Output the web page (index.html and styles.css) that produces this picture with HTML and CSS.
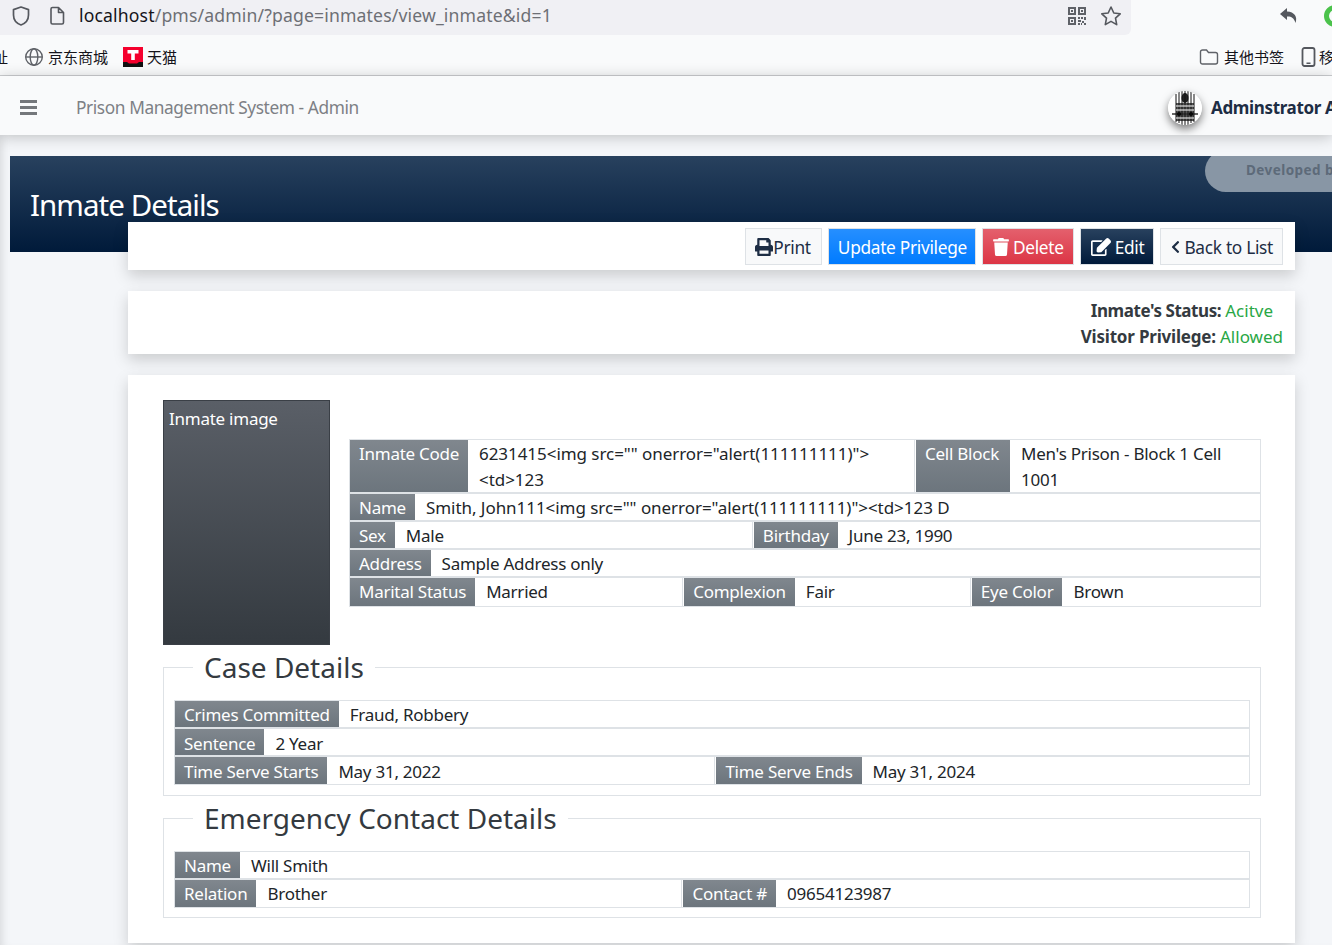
FILE: index.html
```html
<!DOCTYPE html>
<html lang="en">
<head>
  <meta charset="UTF-8" />
  <title>Inmate Details</title>
  <link rel="stylesheet" href="styles.css">
</head>
<body>
  <div class="browser-top">
    <div class="url-bar">
      <svg class="ic shield" viewBox="0 0 20 22" width="20" height="22"><path d="M10 2 L17.5 4.6 V10 C17.5 15 14 18.5 10 20 C6 18.5 2.5 15 2.5 10 V4.6 Z" fill="none" stroke="#55585e" stroke-width="1.7" stroke-linejoin="round"/></svg>
      <svg class="ic page" viewBox="0 0 16 20" width="16" height="20"><path d="M2 3 a1.5 1.5 0 0 1 1.5 -1.5 H9.5 L14.5 6.5 V16.5 a1.5 1.5 0 0 1 -1.5 1.5 H3.5 A1.5 1.5 0 0 1 2 16.5 Z M9.5 1.5 V6.5 H14.5" fill="none" stroke="#55585e" stroke-width="1.6" stroke-linejoin="round"/></svg>
      <span class="url"><b>localhost</b>/pms/admin/?page=inmates/view_inmate&amp;id=1</span>
      <span class="spacer"></span>
      <svg class="ic qr" viewBox="0 0 18 18" width="18" height="18" fill="#5f6268"><path d="M0 0h8v8H0zM2 2v4h4V2zM3 3h2v2H3zM10 0h8v8h-8zM12 2v4h4V2zM13 3h2v2h-2zM0 10h8v8H0zM2 12v4h4v-4zM3 13h2v2H3zM10 10h2v2h-2zM13 10h2v2h-2zM16 10h2v3h-2zM10 13h3v2h-3zM14 14h2v2h-2zM10 16h2v2h-2zM13 16h1v2h-1zM16 16h2v2h-2z" fill-rule="evenodd"/></svg>
      <svg class="ic star" viewBox="0 0 22 22" width="22" height="22"><path d="M11 2 L13.8 8 L20.2 8.8 L15.5 13.2 L16.7 19.6 L11 16.4 L5.3 19.6 L6.5 13.2 L1.8 8.8 L8.2 8 Z" fill="none" stroke="#55585e" stroke-width="1.6" stroke-linejoin="round"/></svg>
    </div>
    <svg class="ic back" viewBox="0 0 20 18" width="20" height="18"><path d="M8 1 L1 7 L8 13 V9.5 C12 9.2 15 10.8 16.5 16 C18.8 9.5 15.5 4.8 8 4.4 Z" fill="#55585e"/></svg>
    <span class="green-dot"></span>
  </div>

  <div class="bookmarks">
    <span class="bm bm-cut">址</span>
    <span class="bm bm-jd">
      <svg viewBox="0 0 20 20" width="20" height="20"><g fill="none" stroke="#5f6268" stroke-width="1.4"><circle cx="10" cy="10" r="8.3"/><ellipse cx="10" cy="10" rx="3.8" ry="8.3"/><path d="M1.7 10h16.6"/></g></svg>
      京东商城
    </span>
    <span class="bm bm-tm">
      <svg viewBox="0 0 20 20" width="20" height="20"><rect width="20" height="20" fill="#f5002d"/><path d="M0 15h4l2 1.500h8l2-1.500h4v5H0z" fill="#111"/><path d="M4.500 3h11v3.500h-3.700V13H8.200V6.500H4.500z" fill="#fff"/></svg>
      天猫
    </span>
    <span class="spacer"></span>
    <span class="bm bm-other">
      <svg viewBox="0 0 20 18" width="20" height="18"><path d="M1.500 4a2 2 0 0 1 2-2h4l2 2.500h7a2 2 0 0 1 2 2V14a2 2 0 0 1-2 2h-13a2 2 0 0 1-2-2z" fill="none" stroke="#5f6268" stroke-width="1.400"/></svg>
      其他书签
    </span>
    <span class="bm bm-mobile">
      <svg viewBox="0 0 14 20" width="15" height="20"><rect x="1" y="1" width="12" height="18" rx="2" fill="none" stroke="#55585e" stroke-width="1.800"/><rect x="5" y="15.500" width="4" height="1.500" fill="#55585e"/></svg>
      移动设备上的书签
    </span>
  </div>

  <nav class="navbar">
    <div class="burger"><i></i><i></i><i></i></div>
    <span class="brand">Prison Management System - Admin</span>
    <span class="spacer"></span>
    <span class="avatar">
      <svg viewBox="0 0 34 34" width="34" height="34"><circle cx="17" cy="17" r="17" fill="#fff"/><ellipse cx="17" cy="7" rx="3.500" ry="5" fill="#222"/><rect x="8" y="12" width="18" height="18" fill="#555"/><path d="M4 23 H30" stroke="#333" stroke-width="1.500"/><circle cx="11" cy="23" r="2" fill="#000"/><circle cx="23" cy="23" r="2" fill="#000"/><path d="M8 3V31M11 1V32M14 0V34M17 0V34M20 0V34M23 1V32M26 3V31" stroke="#111" stroke-width="1"/><path d="M8 15H26M8 19H26M8 27H26" stroke="#fff" stroke-width="1"/></svg>
    </span>
    <span class="user">Adminstrator Admin</span>
  </nav>

  <main class="content">
    <header class="hero">
      <h1>Inmate Details</h1>
      <div class="dev-pill">Developed by</div>
    </header>

    <section class="card actions">
      <a class="btn btn-light btn-print"><svg viewBox="0 0 512 512" width="18" height="18"><path fill="#1d2d44" d="M448 192V77.300c0-8.500-3.400-16.600-9.400-22.600L393.400 9.400c-6-6-14.100-9.400-22.600-9.400H96C78.300 0 64 14.300 64 32v160c-35.300 0-64 28.700-64 64v112c0 8.800 7.200 16 16 16h48v96c0 17.700 14.300 32 32 32h320c17.700 0 32-14.300 32-32v-96h48c8.800 0 16-7.200 16-16V256c0-35.300-28.700-64-64-64zm-64 256H128v-96h256v96zm0-224H128V64h192v48c0 8.800 7.200 16 16 16h48v96z"/></svg>Print</a>
      <a class="btn btn-blue">Update Privilege</a>
      <a class="btn btn-red"><svg viewBox="0 0 448 512" width="16" height="18"><path fill="#fff" d="M432 32H312l-9.400-18.700A24 24 0 0 0 281.100 0H166.800a23.700 23.700 0 0 0-21.400 13.300L136 32H16A16 16 0 0 0 0 48v32a16 16 0 0 0 16 16h416a16 16 0 0 0 16-16V48a16 16 0 0 0-16-16zM53.200 467a48 48 0 0 0 47.900 45h245.800a48 48 0 0 0 47.900-45L416 128H32z"/></svg>Delete</a>
      <a class="btn btn-navy"><svg viewBox="0 0 576 512" width="20" height="18"><path fill="#fff" d="M402.300 344.900l32-32c5-5 13.700-1.500 13.700 5.700V464c0 26.500-21.500 48-48 48H48c-26.500 0-48-21.500-48-48V112c0-26.500 21.500-48 48-48h273.500c7.100 0 10.700 8.600 5.700 13.700l-32 32c-1.500 1.500-3.500 2.300-5.700 2.300H48v352h352V350.500c0-2.100.8-4.100 2.300-5.600zm156.600-201.800L296.300 405.700l-90.400 10c-26.200 2.900-48.500-19.200-45.600-45.600l10-90.400L432.900 17.100c22.900-22.900 59.900-22.900 82.700 0l43.200 43.200c22.900 22.900 22.900 60 .1 82.800z"/></svg>Edit</a>
      <a class="btn btn-light btn-back"><svg viewBox="0 0 320 512" width="9" height="14"><path fill="#1d2d44" d="M34.500 239L228.900 44.700c9.400-9.400 24.600-9.400 33.900 0l22.700 22.700c9.400 9.400 9.400 24.500 0 33.900L131.500 256l154 154.800c9.300 9.400 9.300 24.500 0 33.900l-22.700 22.700c-9.400 9.400-24.600 9.400-33.900 0L34.500 273c-9.400-9.400-9.400-24.600 0-34z"/></svg>Back to List</a>
    </section>

    <section class="card status">
      <div class="status-line first"><b>Inmate's Status:</b> <span class="ok">Acitve</span></div>
      <div class="status-line"><b>Visitor Privilege:</b> <span class="ok">Allowed</span></div>
    </section>

    <section class="card details">
      <div class="top">
        <div class="photo">Inmate image</div>
        <div class="info">
          <div class="row tall">
            <span class="lb w-code">Inmate Code</span>
            <span class="val w-codeval wide">6231415&lt;img src="" onerror="alert(111111111)"&gt;&lt;td&gt;123</span>
            <span class="lb w-block">Cell Block</span>
            <span class="val grow">Men's Prison - Block 1 Cell 1001</span>
          </div>
          <div class="row">
            <span class="lb">Name</span>
            <span class="val grow wide">Smith, John111&lt;img src="" onerror="alert(111111111)"&gt;&lt;td&gt;123 D</span>
          </div>
          <div class="row">
            <span class="lb">Sex</span>
            <span class="val w-sex">Male</span>
            <span class="lb">Birthday</span>
            <span class="val grow">June 23, 1990</span>
          </div>
          <div class="row">
            <span class="lb">Address</span>
            <span class="val grow">Sample Address only</span>
          </div>
          <div class="row">
            <span class="lb">Marital Status</span>
            <span class="val w-marital">Married</span>
            <span class="lb">Complexion</span>
            <span class="val w-complexion">Fair</span>
            <span class="lb">Eye Color</span>
            <span class="val grow">Brown</span>
          </div>
        </div>
      </div>

      <fieldset class="group case">
        <legend>Case Details</legend>
        <div class="row">
          <span class="lb">Crimes Committed</span>
          <span class="val grow">Fraud, Robbery</span>
        </div>
        <div class="row">
          <span class="lb">Sentence</span>
          <span class="val grow">2 Year</span>
        </div>
        <div class="row">
          <span class="lb">Time Serve Starts</span>
          <span class="val w-start">May 31, 2022</span>
          <span class="lb">Time Serve Ends</span>
          <span class="val grow">May 31, 2024</span>
        </div>
      </fieldset>

      <fieldset class="group contact">
        <legend>Emergency Contact Details</legend>
        <div class="row">
          <span class="lb">Name</span>
          <span class="val grow">Will Smith</span>
        </div>
        <div class="row tight">
          <span class="lb">Relation</span>
          <span class="val w-rel">Brother</span>
          <span class="lb">Contact #</span>
          <span class="val grow">09654123987</span>
        </div>
      </fieldset>
    </section>
  </main>
</body>
</html>
```

FILE: styles.css
```css
* { box-sizing: border-box; }
html, body { height: 945px; overflow: hidden; }
body { margin: 0; width: 1332px; background: #f4f6f9; color: #212529; font-family: "Noto Sans", "Noto Sans CJK SC", sans-serif; font-size: 17px; letter-spacing: -.25px; }
.spacer { flex: 1; }

/* browser chrome */
.browser-top { height: 40px; background: #f9fafb; display: flex; align-items: flex-start; overflow: hidden; }
.url-bar { width: 1131px; height: 35px; background: #f0f0f4; border-radius: 0 0 6px 0; display: flex; align-items: center; padding: 0 9px 4px 11px; flex: none; }
.page { margin-left: 18px; }
.url { margin: 0 0 2px 14px; font-size: 17.600px; color: #6d6f75; letter-spacing: .15px; }
.url b { font-weight: 400; color: #15141a; }
.star { margin-left: 14px; }
.back { margin: 7px 0 0 148px; flex: none; }
.green-dot { width: 22px; height: 22px; margin: 5px 0 0 25px; border-radius: 50%; border: 5px solid #4bc24b; flex: none; }

.bookmarks { height: 36px; background: #f9fafb; border-bottom: 1px solid #ccced1; display: flex; align-items: center; font-size: 15px; letter-spacing: 0; color: #15141a; overflow: hidden; padding-bottom: 2px; white-space: nowrap; }
.bm { display: inline-flex; align-items: center; gap: 4px; flex: none; }
.bm svg { flex: none; }
.bm-cut { width: 8px; overflow: hidden; justify-content: flex-end; }
.bm-jd { margin-left: 16px; }
.bm-tm { margin-left: 15px; }
.bm-other { gap: 5px; }
.bm-mobile { margin: 0 -100px 0 17px; width: 131px; gap: 3px; }

/* navbar */
.navbar { height: 59px; padding-top: 4px; background: #f9fafb; display: flex; align-items: center; box-shadow: 0 2px 14px rgba(0,0,0,.22); position: relative; overflow: hidden; white-space: nowrap; }
.burger { width: 17px; margin-left: 20px; display: flex; flex-direction: column; gap: 3px; }
.burger i { display: block; height: 3px; background: #74777b; }
.brand { margin-left: 39px; color: #7d8085; font-size: 17.300px; letter-spacing: -.4px; }
.avatar { width: 34px; height: 34px; border-radius: 50%; box-shadow: 0 4px 8px rgba(0,0,0,.5); overflow: hidden; margin-right: 9px; flex: none; }
.user { font-weight: 700; color: #1d2d44; margin-right: -43px; flex: none; width: 164px; font-size: 17px; letter-spacing: -.35px; }

/* page */
.content { padding: 21px 37px 0 128px; position: relative; box-shadow: inset 8px 0 8px -6px rgba(0,0,0,.12); height: 810px; }
.hero { position: relative; height: 96px; margin: 0 -37px 0 -118px; background: linear-gradient(#28415e, #001a3a); overflow: hidden; }
.hero h1 { margin: 0; padding: 29px 0 0 20px; font-weight: 400; font-size: 29.500px; letter-spacing: -.95px; line-height: 40px; color: #fff; }
.dev-pill { position: absolute; top: -6px; left: 1195px; width: 160px; height: 42px; border-radius: 21px 0 0 21px; background: #8896a5; color: #5d6a79; font-size: 13.500px; letter-spacing: .45px; font-weight: 700; padding: 11px 0 0 41px; white-space: nowrap; }

.card { background: #fff; box-shadow: 0 6px 14px rgba(0,0,0,.17); }
.actions { height: 48px; margin-top: -30px; position: relative; display: flex; justify-content: flex-end; align-items: center; gap: 6px; padding: 0 12px 0 0; }
.btn { height: 37px; display: inline-flex; align-items: center; padding: 2px 9px 0 10px; border: 1px solid #dee2e6; color: #fff; font-size: 17.300px; letter-spacing: -.3px; white-space: nowrap; }
.btn svg { margin-right: 4px; flex: none; }
.btn-light { background: #f8f9fa; color: #1d2d44; }
.btn-print { padding-left: 9px; padding-right: 10px; }
.btn-print svg { margin-right: 0; }
.btn-blue { background: linear-gradient(#268fff, #007bff); padding-left: 9px; padding-right: 8px; }
.btn-red { background: linear-gradient(#e4606d, #dc3545); }
.btn-navy { background: linear-gradient(#28415e, #001a3a); }

.status { height: 63px; margin-top: 21px; text-align: right; padding: 7px 12px 0 0; line-height: 26px; }
.status-line.first { padding-right: 10px; }
.status-line b { color: #343a40; letter-spacing: -.2px; }
.status-line.first b { letter-spacing: -.45px; }
.ok { color: #28a745; letter-spacing: 0; }

.details { margin-top: 21px; height: 568px; padding: 25px 34px 0 35px; }
.top { display: flex; }
.photo { width: 167px; height: 245px; flex: none; background: linear-gradient(#5a5f67, #343a40); border: 1px solid #3a3f46; color: #fff; padding: 6px 5px; line-height: 24px; }
.info { flex: 1; margin: 39px 0 0 19px; border: 1px solid #dee2e6; height: 168px; }

.row { display: flex; height: 28px; border-bottom: 2px solid #dee2e6; line-height: 27px; }
.row:last-child { border-bottom: 0; }
.row.tall { height: 54px; line-height: 26px; }
.row.tall span { padding-top: 1px; }
.lb { flex: none; padding: 0 9px; color: #fff; background: linear-gradient(#80878e, #6c757d); margin-right: 1px; white-space: nowrap; }
.val { flex: none; padding: 0 10px; border-right: 1px solid #dee2e6; margin-right: 1px; color: #212529; }
.val.grow { flex: 1; border-right: 0; margin-right: 0; min-width: 0; }
.wide { letter-spacing: -.05px; }
.w-code { width: 118px; }
.w-codeval { width: 446px; }
.w-block { width: 94px; }
.w-sex { width: 357px; }
.w-marital { width: 207px; }
.w-complexion { width: 175px; }
.w-start { width: 387px; }
.w-rel { width: 425px; }

.group { margin: 0; padding: 15px 10px 0; border: 1px solid #dee2e6; min-width: 0; }
.group legend { margin-left: 19px; padding: 0 11px; font-size: 28px; letter-spacing: 0; line-height: 36px; color: #343a40; }
.group .row { height: 28px; border: 1px solid #dee2e6; border-width: 0 1px 2px; line-height: 29px; }
.group .row:first-of-type { border-top-width: 1px; height: 29px; line-height: 27px; }
.group .row:last-child { border-bottom-width: 1px; }
.group .row.tight { line-height: 27px; }
.case { margin-top: 4px; height: 147px; }
.contact { margin-top: 4px; height: 118px; }
```
